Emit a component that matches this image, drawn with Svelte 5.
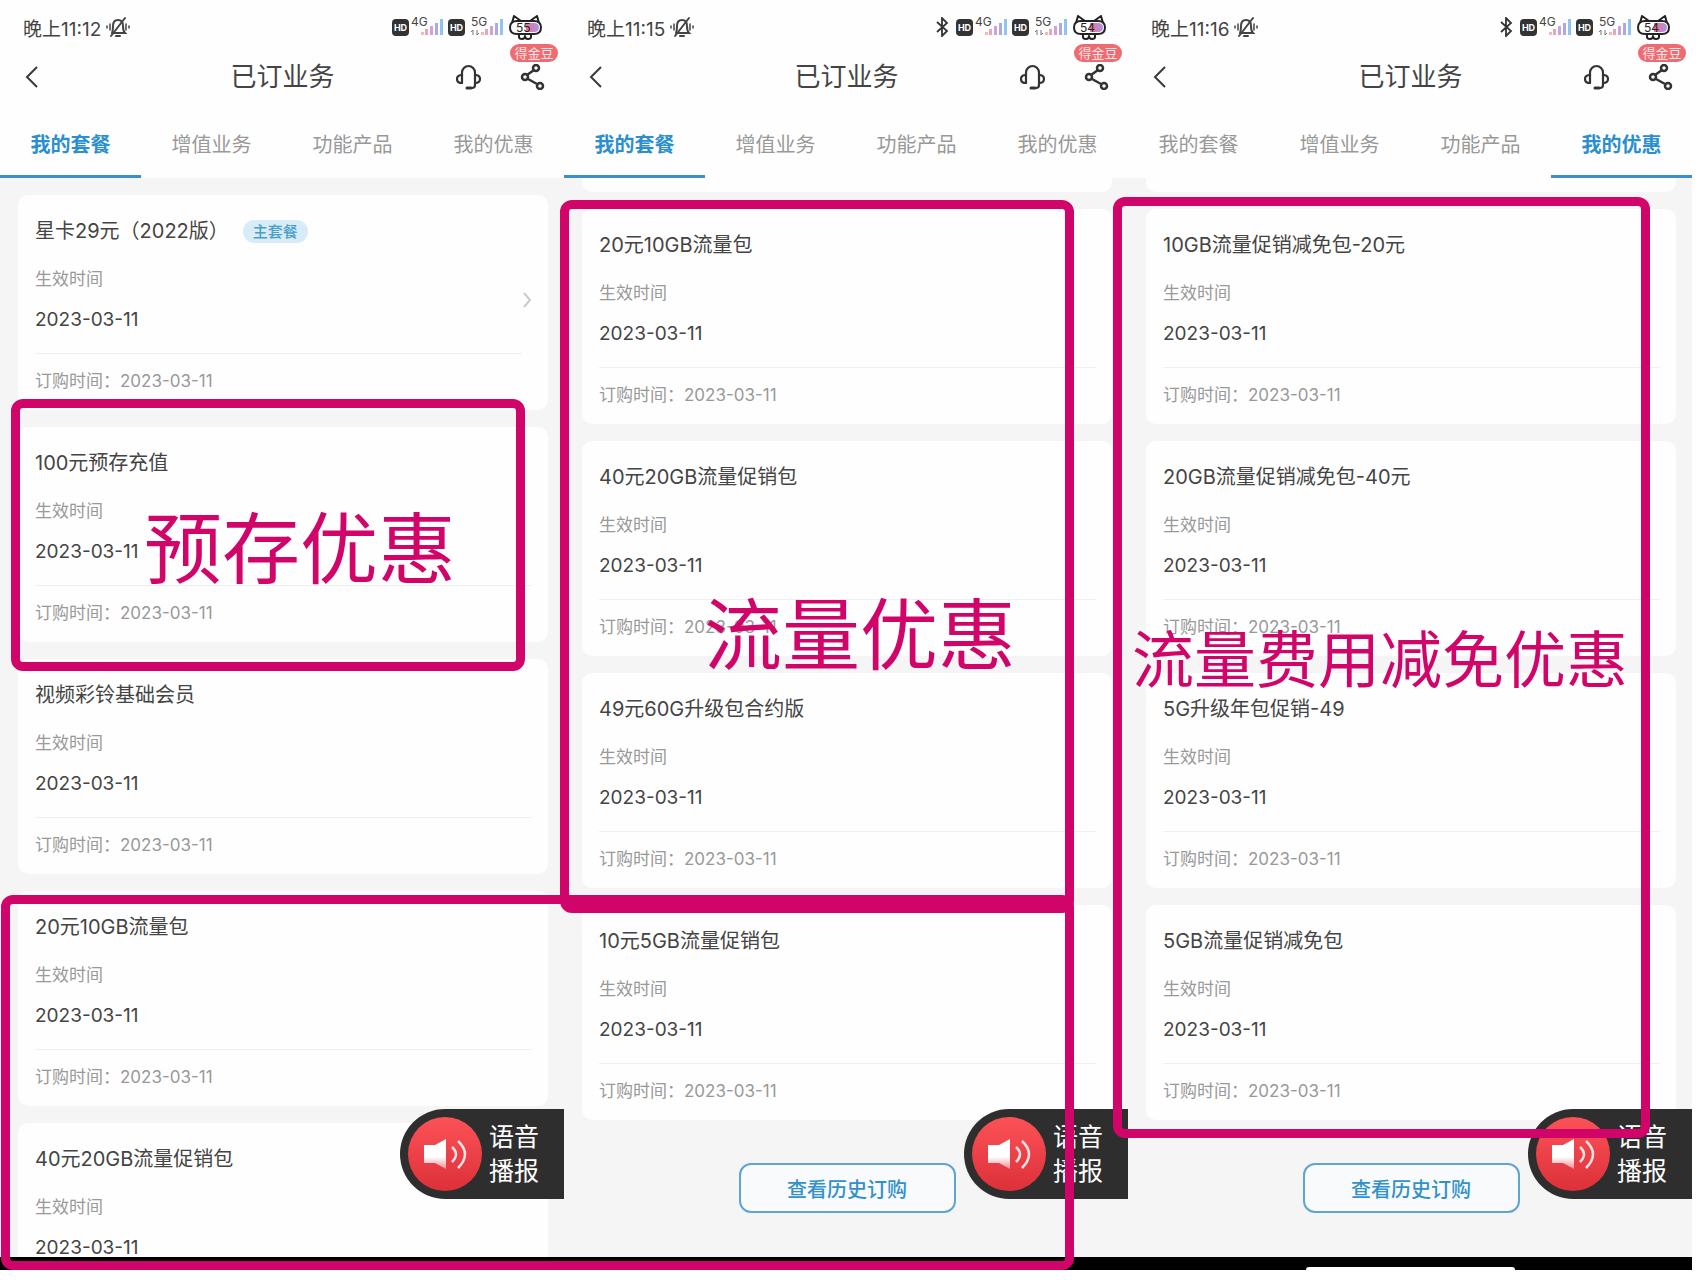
<script lang="ts">
  type Plan = { name: string; tag?: string; more?: boolean };
  type Phone = {
    time: string;
    battery: string;
    bluetooth: boolean;
    active: number;
    scrolled: boolean;
    history: boolean;
    plans: Plan[];
  };

  const tabs = ['我的套餐', '增值业务', '功能产品', '我的优惠'];
  const date = '2023-03-11';

  const phones: Phone[] = [
    {
      time: '晚上11:12',
      battery: '55',
      bluetooth: false,
      active: 0,
      scrolled: false,
      history: false,
      plans: [
        { name: '星卡29元（2022版）', tag: '主套餐', more: true },
        { name: '100元预存充值' },
        { name: '视频彩铃基础会员' },
        { name: '20元10GB流量包' },
        { name: '40元20GB流量促销包' }
      ]
    },
    {
      time: '晚上11:15',
      battery: '54',
      bluetooth: true,
      active: 0,
      scrolled: true,
      history: true,
      plans: [
        { name: '20元10GB流量包' },
        { name: '40元20GB流量促销包' },
        { name: '49元60G升级包合约版' },
        { name: '10元5GB流量促销包' }
      ]
    },
    {
      time: '晚上11:16',
      battery: '54',
      bluetooth: true,
      active: 3,
      scrolled: true,
      history: true,
      plans: [
        { name: '10GB流量促销减免包-20元' },
        { name: '20GB流量促销减免包-40元' },
        { name: '5G升级年包促销-49' },
        { name: '5GB流量促销减免包' }
      ]
    }
  ];

  // hand-drawn marks on top of the three screens
  const boxes = [
    { x: 11, y: 399, w: 514, h: 272 },
    { x: 560, y: 200, w: 514, h: 713 },
    { x: 1, y: 895, w: 1073, h: 375 },
    { x: 1113, y: 197, w: 537, h: 941 }
  ];
  const notes = [
    { text: '预存优惠', x: 144, y: 499, size: 78 },
    { text: '流量优惠', x: 704, y: 585, size: 78 },
    { text: '流量费用减免优惠', x: 1132, y: 611, size: 62 }
  ];
</script>

{#snippet signal(label: string, arrows: boolean)}
  <svg class="signal" class:tight={!arrows} viewBox="0 0 33 20" aria-hidden="true">
    <text x="1" y="9" font-size="12" fill="#444">{label}</text>
    {#if arrows}
      <path d="M3 13v5M1 15l2-2M7 13v5M7 18l2-2" stroke="#777" fill="none" />
    {/if}
    <g transform="translate(11 0)">
      <rect x="0" y="15" width="3" height="3" fill="#f2b9bd" />
      <rect x="4" y="12" width="3" height="6" fill="#e9a6b4" />
      <rect x="9" y="9" width="3" height="9" fill="#cfa3d6" />
      <rect x="14" y="6" width="3" height="12" fill="#a9a9e6" />
      <rect x="19" y="2" width="3" height="16" fill="#8fc3f0" />
    </g>
  </svg>
{/snippet}

<main class="board">
  {#each phones as phone}
    <section class="phone">
      <header>
        <div class="status">
          <span>{phone.time}</span>
          <svg class="mute" viewBox="0 0 24 22" aria-hidden="true">
            <g fill="none" stroke="#444" stroke-width="2" stroke-linecap="round">
              <path d="M6 17h13c-2-2-2-4-2-7 0-4-2-6-5-6s-5 2-5 6c0 3 0 5-1 7" />
              <path d="M19 2 5 20M10 20h4" />
              <path d="M4 8v6M20 8v6M1 10v2M23 10v2" stroke-width="1.5" />
            </g>
          </svg>
          <div class="status-icons">
            {#if phone.bluetooth}
              <svg class="bluetooth" viewBox="0 0 13 20" aria-hidden="true">
                <path d="m1 5 10 9-5 5V1l5 5-10 9" fill="none" stroke="#333" stroke-width="1.8" />
              </svg>
            {/if}
            <span class="hd">HD</span>
            {@render signal('4G', false)}
            <span class="hd">HD</span>
            {@render signal('5G', true)}
            <svg class="cat" viewBox="0 0 33 25" aria-hidden="true">
              <defs>
                <linearGradient id="charge">
                  <stop offset="0" stop-color="#f0718c" />
                  <stop offset="1" stop-color="#a995ea" />
                </linearGradient>
              </defs>
              <g fill="#fff" stroke="#222" stroke-width="2" stroke-linejoin="round">
                <path d="M10 18v4q0 2 3 2 3 0 3-3 0 3 3 3t3-2v-4z" />
                <path d="M3 8 5 1l7 5M30 8l-2-7-7 5" />
                <path d="M8 6Q1 6 1 12.500T8 19h17q7 0 7-6.500T25 6z" />
              </g>
              <path d="M17 8h8q5 0 5 4.500T25 17h-8z" fill="url(#charge)" />
              <text x="7" y="17" font-size="12" fill="#222">{phone.battery}</text>
            </svg>
          </div>
        </div>

        <div class="titlebar">
          <button class="back" aria-label="返回">
            <svg viewBox="0 0 14 24" aria-hidden="true">
              <path d="M12 2 2 12l10 10" fill="none" stroke="#3a3a3a" stroke-width="2" />
            </svg>
          </button>
          <h1>已订业务</h1>
          <div class="actions">
            <button aria-label="客服">
              <svg viewBox="0 0 26 26" aria-hidden="true">
                <g fill="none" stroke="#333" stroke-width="2.200" stroke-linecap="round">
                  <path d="M6 19V8.500a6.500 6.500 0 0 1 13 0V21q0 3-3 3h-2" />
                  <path d="M6 11q-5 0-5 4t5 4M19 11q5 0 5 4t-5 4" />
                  <path d="M11 24h4" stroke-width="3" />
                </g>
              </svg>
            </button>
            <button class="share" aria-label="分享">
              <svg viewBox="0 0 26 26" aria-hidden="true">
                <g fill="none" stroke="#333" stroke-width="2.500">
                  <circle cx="16" cy="4" r="3" />
                  <circle cx="5" cy="13" r="3" />
                  <circle cx="20" cy="22" r="3" />
                  <path d="m7 11 7-5M8 15l9 5" />
                </g>
              </svg>
              <span class="bean">得金豆</span>
            </button>
          </div>
        </div>

        <nav>
          {#each tabs as tab, i}
            <button class:active={i === phone.active}>{tab}</button>
          {/each}
        </nav>
      </header>

      <div class="list">
        {#if phone.scrolled}
          <div class="tail"></div>
        {:else}
          <div class="lead"></div>
        {/if}
        {#each phone.plans as plan}
          <article class="card">
            <div class="info">
              <h2>
                {plan.name}
                {#if plan.tag}<span class="tag">{plan.tag}</span>{/if}
              </h2>
              <p class="label">生效时间</p>
              <p class="date">{date}</p>
              <p class="order">订购时间：{date}</p>
            </div>
            {#if plan.more}
              <svg class="more" viewBox="0 0 10 16" aria-hidden="true">
                <path d="m2 1 6 7-6 7" fill="none" stroke="#ccc" stroke-width="2" />
              </svg>
            {/if}
          </article>
        {/each}
        {#if phone.history}
          <button class="history">查看历史订购</button>
        {/if}
      </div>

      <button class="voice">
        <svg viewBox="0 0 74 74" aria-hidden="true">
          <defs>
            <linearGradient id="red" x2="0" y2="1">
              <stop offset="0" stop-color="#fb5257" />
              <stop offset="1" stop-color="#dd3039" />
            </linearGradient>
            <linearGradient id="horn" x2="0" y2="1">
              <stop offset="0.600" stop-color="#fff" />
              <stop offset="1" stop-color="#fff" stop-opacity="0.400" />
            </linearGradient>
          </defs>
          <circle cx="37" cy="37" r="37" fill="url(#red)" />
          <path d="M16 28h11l11-6v30l-11-6H16z" fill="url(#horn)" />
          <path
            d="M44 30q8 7 0 15M50 24q14 13 0 27"
            fill="none"
            stroke="#fff"
            stroke-opacity="0.850"
            stroke-width="2.500"
          />
        </svg>
        <span>语音<br />播报</span>
      </button>

      <footer><i></i></footer>
    </section>
  {/each}

  <div class="marks">
    {#each boxes as b}
      <div class="box" style="left:{b.x}px;top:{b.y}px;width:{b.w}px;height:{b.h}px"></div>
    {/each}
    {#each notes as n}
      <p style="left:{n.x}px;top:{n.y}px;font-size:{n.size}px">{n.text}</p>
    {/each}
  </div>
</main>

<style>
  :global(body) {
    margin: 0;
    background: #fff;
  }
  .board {
    position: relative;
    display: grid;
    grid-template-columns: repeat(3, 1fr);
    padding-right: 13px;
    font-family: Inter, 'Noto Sans CJK SC', sans-serif;
    color: #444;
  }
  .board * { box-sizing: border-box; }
  h1, h2, p { margin: 0; font-weight: 400; }
  svg { display: block; }
  button {
    margin: 0;
    padding: 0;
    border: 0;
    background: none;
    font: inherit;
    color: inherit;
    cursor: pointer;
  }

  .phone {
    position: relative;
    display: flex;
    flex-direction: column;
    min-width: 0;
    aspect-ratio: 564 / 1270;
    overflow: hidden;
    background: #f5f5f5;
  }
  header { flex: none; background: #fefefe; }

  .status {
    display: flex;
    align-items: center;
    height: 52px;
    padding: 2px 22px 0 23px;
    font-size: 18px;
  }
  .status > span { font-size: 19px; }
  .mute { width: 26px; height: 22px; margin-left: 4px; }
  .status-icons {
    display: flex;
    align-items: center;
    gap: 5px;
    margin-left: auto;
  }
  .bluetooth { width: 13px; height: 20px; margin-right: 2px; }
  .hd {
    width: 17px;
    border-radius: 4px;
    background: #333;
    color: #fff;
    font-size: 9px;
    font-weight: 700;
    line-height: 17px;
    text-align: center;
  }
  .signal { width: 33px; height: 20px; overflow: visible; }
  .tight { margin-left: -4px; }
  .cat { width: 33px; height: 25px; margin-left: 1px; }

  .titlebar {
    display: grid;
    grid-template-columns: 1fr auto 1fr;
    align-items: center;
    height: 50px;
    padding: 0 18px 0 25px;
  }
  .back { justify-self: start; }
  .back svg { width: 14px; height: 24px; }
  h1 { padding-right: 6px; font-size: 26px; line-height: 36px; }
  .actions {
    display: flex;
    justify-content: flex-end;
    gap: 38px;
  }
  .actions svg { width: 26px; height: 26px; }
  .share { position: relative; }
  .bean {
    position: absolute;
    right: -12px;
    bottom: 28px;
    width: 48px;
    border-radius: 9px;
    background: #ee6b72;
    color: #fde4e4;
    font-size: 13px;
    line-height: 18px;
  }

  nav {
    display: grid;
    grid-template-columns: repeat(4, 1fr);
    height: 76px;
  }
  nav button {
    padding-top: 9px;
    border-bottom: 3px solid transparent;
    color: #999;
    font-size: 20px;
  }
  nav .active {
    border-color: #3d8fcb;
    color: #2a8fcf;
    font-weight: 700;
  }

  .list {
    display: flex;
    flex: 1;
    flex-direction: column;
    gap: 17px;
    min-height: 0;
    padding: 0 16px 0 18px;
    overflow: hidden;
  }
  .lead { flex: none; }
  .tail {
    flex: none;
    height: 14px;
    border-radius: 0 0 10px 10px;
    background: #fefefe;
  }
  .card {
    display: flex;
    flex: none;
    align-items: center;
    padding: 22px 16px 17px 17px;
    border-radius: 10px;
    background: #fefefe;
  }
  .info { flex: 1; }
  h2 {
    display: flex;
    align-items: center;
    gap: 14px;
    font-size: 20px;
    line-height: 28px;
  }
  .tag {
    padding: 0 10px;
    border-radius: 12px;
    background: #d8ecf8;
    color: #4a9fc9;
    font-size: 15px;
    font-weight: 500;
    line-height: 23px;
  }
  .label {
    margin-top: 22px;
    color: #999;
    font-size: 17px;
    line-height: 24px;
  }
  .date {
    margin: 15px 0 19px;
    font-size: 19px;
    line-height: 28px;
  }
  .order {
    padding-top: 15px;
    border-top: 1px solid #f0f0f0;
    color: #999;
    font-size: 17px;
    line-height: 24px;
  }
  .more { width: 10px; height: 16px; margin-bottom: 10px; }
  .history {
    align-self: center;
    width: 217px;
    height: 50px;
    margin-top: 26px;
    border: 2px solid #5fa5cf;
    border-radius: 12px;
    background: #f8fafb;
    color: #3191cb;
    font-size: 20px;
    font-weight: 500;
  }

  .voice {
    position: absolute;
    right: 0;
    bottom: 71px;
    display: flex;
    align-items: center;
    gap: 7px;
    width: 164px;
    height: 90px;
    padding-left: 8px;
    border-radius: 45px 0 0 45px;
    background: #2e2e2e;
    color: #fff;
    font-size: 25px;
    line-height: 34px;
  }
  .voice svg { width: 74px; height: 74px; }

  footer {
    display: flex;
    flex: none;
    align-items: flex-end;
    justify-content: center;
    height: 13px;
    background: #000;
  }
  footer i {
    width: 209px;
    height: 1px;
    background: #fff;
  }
  .phone:nth-child(3) footer i { height: 3px; border-radius: 3px 3px 0 0; }

  .marks {
    position: absolute;
    inset: 0;
    pointer-events: none;
  }
  .box {
    position: absolute;
    border: 9px solid #d10569;
    border-radius: 12px;
  }
  .marks p {
    position: absolute;
    color: #d10569;
    font-family: 'Noto Sans CJK SC', sans-serif;
    line-height: 90px;
    white-space: nowrap;
  }
</style>
